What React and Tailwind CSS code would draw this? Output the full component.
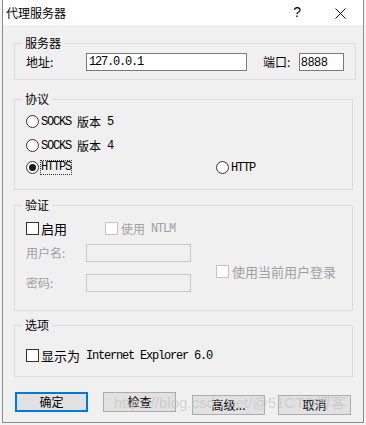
import React from 'react';

const cjk = "font-['Noto_Sans_CJK_SC','Noto_Sans',sans-serif]";
const mono = "font-['Liberation_Mono','Noto_Sans_CJK_SC',monospace] tracking-[-1.2px] whitespace-pre";

const Radio = ({ checked }) => (
    <span className="w-[13px] h-[13px] rounded-full border border-[#333] bg-white flex items-center justify-center shrink-0">
        {checked && <span className="w-[7px] h-[7px] rounded-full bg-[#1a1a1a]" />}
    </span>
);

const Check = ({ disabled }) => (
    <span className={`w-[13px] h-[13px] border bg-white shrink-0 ${disabled ? 'border-[#c4c4c4]' : 'border-[#333]'}`} />
);

const Group = ({ title, className, children }) => (
    <fieldset className={`mx-[11px] w-[339px] border border-[#dcdcdc] px-[11px] ${className}`}>
        <legend className={`ml-[-4px] px-[3px] text-[12px] leading-[16px] text-black ${cjk}`}>{title}</legend>
        {children}
    </fieldset>
);

const Button = ({ label, primary }) => (
    <button className={`h-[20px] w-[73px] bg-[#e1e1e1] text-[12px] leading-none text-black ${cjk} ${primary ? 'border-2 border-[#0078d7]' : 'border border-[#adadad]'}`}>
        {label}
    </button>
);

const App = () => {
    return (
        <div className="w-[366px] h-[425px] bg-[#f4f4f4] overflow-hidden">
            <div className="ml-[2px] w-[362px] h-[423px] border border-[#8c8c8c] border-t-0 bg-[#f0f0f0] flex flex-col relative overflow-hidden">
                {/* title bar */}
                <div className={`h-[25px] bg-white flex items-center pl-[3px] pr-[17px] text-[12px] text-black ${cjk}`}>
                    <span>代理服务器</span>
                    <span className="ml-auto mr-[34px] text-[14px] font-['Liberation_Sans',sans-serif]">?</span>
                    <svg width="11" height="11" viewBox="0 0 11 11" className="mt-[2px]">
                        <path d="M0.5 0.5 L10.5 10.5 M10.5 0.5 L0.5 10.5" stroke="#111" strokeWidth="1" />
                    </svg>
                </div>

                {/* 服务器 */}
                <Group title="服务器" className="mt-[10px] h-[45px]">
                    <div className={`flex items-center text-[12px] mt-[2px] ${cjk}`}>
                        <span className="w-[60px]">地址:</span>
                        <div className={`w-[161px] h-[18px] border border-[#7a7a7a] bg-white pl-[2px] text-[12px] leading-[16px] ${mono}`}>127.0.0.1</div>
                        <span className="ml-[16px] w-[36px]">端口:</span>
                        <div className="w-[45px] h-[18px] border border-[#7a7a7a] bg-white pl-[1px] text-[12px] leading-[16px] font-['Liberation_Sans',sans-serif]">8888</div>
                    </div>
                </Group>

                {/* 协议 */}
                <Group title="协议" className="mt-[11px] h-[99px]">
                    <div className="flex flex-col text-[12px] text-black pt-[8px]">
                        <label className="flex items-center gap-[2px] h-[13px]">
                            <Radio />
                            <span className="flex items-center">
                                <span className={mono}>{'SOCKS '}</span><span className={cjk}>版本</span><span className={mono}>{' 5'}</span>
                            </span>
                        </label>
                        <label className="flex items-center gap-[2px] h-[13px] mt-[11px]">
                            <Radio />
                            <span className="flex items-center">
                                <span className={mono}>{'SOCKS '}</span><span className={cjk}>版本</span><span className={mono}>{' 4'}</span>
                            </span>
                        </label>
                        <div className="flex items-center h-[13px] mt-[9px]">
                            <label className="flex items-center gap-[2px] w-[190px]">
                                <Radio checked />
                                <span className={`${mono} outline outline-1 outline-dotted outline-[#333] leading-[13px]`}>HTTPS</span>
                            </label>
                            <label className="flex items-center gap-[2px]">
                                <Radio />
                                <span className={mono}>HTTP</span>
                            </label>
                        </div>
                    </div>
                </Group>

                {/* 验证 */}
                <Group title="验证" className="mt-[7px] h-[114px]">
                    <div className={`flex text-[12px] ${cjk}`}>
                        <div className="flex flex-col w-[190px]">
                            <div className="flex items-center h-[13px] mt-[9px]">
                                <label className="flex items-center gap-[2px] w-[79px]">
                                    <Check />
                                    <span className="text-[13px]">启用</span>
                                </label>
                                <label className="flex items-center gap-[3px] text-[#a0a0a0]">
                                    <Check disabled />
                                    <span className="flex items-center">
                                        <span>使用</span><span className={mono}>{' NTLM'}</span>
                                    </span>
                                </label>
                            </div>
                            <div className="flex items-center mt-[9px] text-[#a0a0a0]">
                                <span className="w-[60px]">用户名:</span>
                                <div className="w-[105px] h-[18px] border border-[#c8c8c8] bg-[#f0f0f0]" />
                            </div>
                            <div className="flex items-center mt-[12px] text-[#a0a0a0]">
                                <span className="w-[60px]">密码:</span>
                                <div className="w-[105px] h-[18px] border border-[#c8c8c8] bg-[#f0f0f0]" />
                            </div>
                        </div>
                        <label className="flex items-center gap-[3px] self-start mt-[49px] text-[#a0a0a0] text-[13px]">
                            <Check disabled />
                            <span>使用当前用户登录</span>
                        </label>
                    </div>
                </Group>

                {/* 选项 */}
                <Group title="选项" className="mt-[6px] h-[60px]">
                    <label className="flex items-center gap-[2px] mt-[13px] text-[12px]">
                        <Check />
                        <span className="flex items-center">
                            <span className={`${cjk} text-[13px]`}>显示为</span>
                            <span className={mono}>{' Internet Explorer 6.0'}</span>
                        </span>
                    </label>
                </Group>

                {/* buttons */}
                <div className="flex mt-[15px] ml-[12px] gap-[15px]">
                    <Button label="确定" primary />
                    <Button label="检查" />
                    <div className="ml-[1px]"><Button label="高级..." /></div>
                    <div className="-ml-[2px]"><Button label="取消" /></div>
                </div>

                {/* watermark */}
                <div className="absolute left-[111px] top-[393px] whitespace-nowrap text-[15px] leading-[20px] text-[#c0c0c0]/60 pointer-events-none font-['Liberation_Sans','Noto_Sans_CJK_SC',sans-serif]">
                    https://blog.csdn.net/@51CTO博客
                </div>
            </div>
        </div>
    );
};

export default App;
